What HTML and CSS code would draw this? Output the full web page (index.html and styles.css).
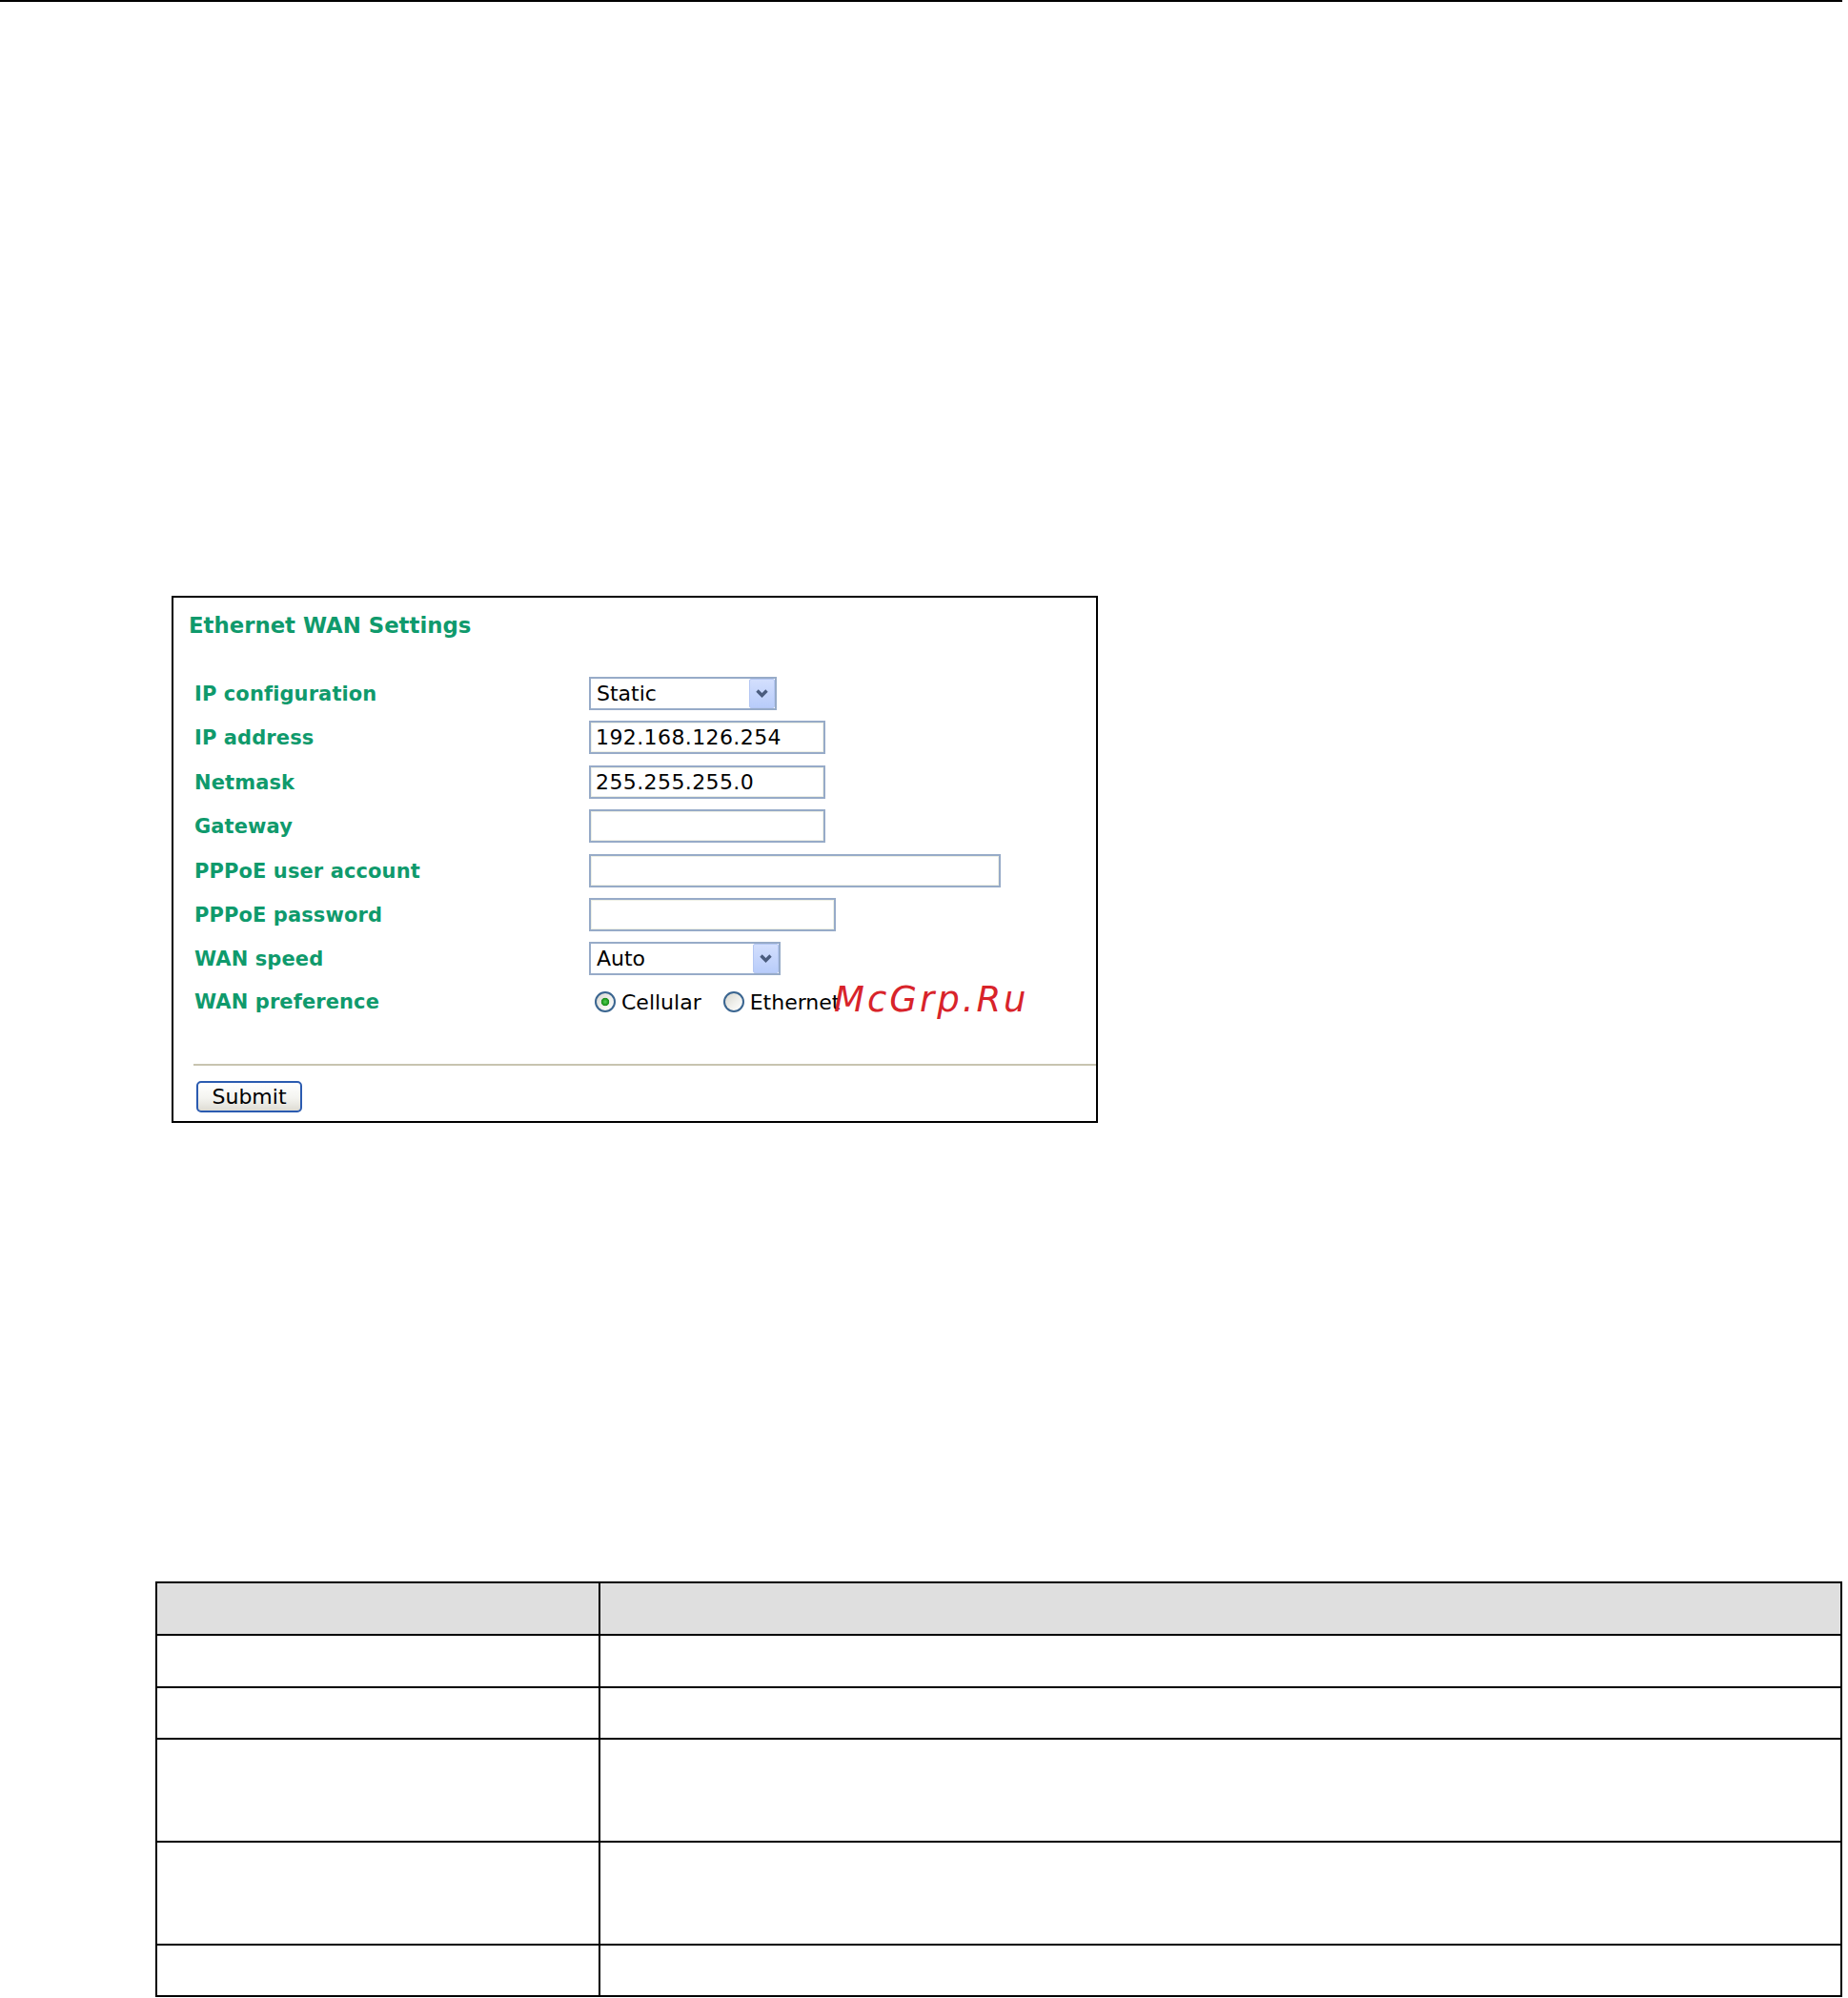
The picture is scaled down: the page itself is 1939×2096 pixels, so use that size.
FILE: index.html
```html
<!DOCTYPE html>
<html lang="en">
<head>
<meta charset="utf-8">
<title>Ethernet WAN Settings</title>
<link rel="stylesheet" href="styles.css">
</head>
<body>
<div class="top-rule"></div>

<section class="panel">
  <h2 class="panel-title">Ethernet WAN Settings</h2>
  <div class="form">
    <div class="row">
      <span class="label">IP configuration</span>
      <span class="select-wrap select-ipconf">
        <select class="select"><option>Static</option></select>
        <span class="select-btn"><svg width="25" height="29" viewBox="0 0 25 29"><path d="M7.5 11.5 L12.5 16.5 L17.5 11.5" fill="none" stroke="#4a5c7e" stroke-width="3.4"/></svg></span>
      </span>
    </div>
    <div class="row">
      <span class="label">IP address</span>
      <input class="text w-ip" type="text" value="192.168.126.254">
    </div>
    <div class="row">
      <span class="label">Netmask</span>
      <input class="text w-ip" type="text" value="255.255.255.0">
    </div>
    <div class="row">
      <span class="label">Gateway</span>
      <input class="text w-ip" type="text" value="">
    </div>
    <div class="row">
      <span class="label">PPPoE user account</span>
      <input class="text w-account" type="text" value="">
    </div>
    <div class="row">
      <span class="label">PPPoE password</span>
      <input class="text w-pass" type="password" value="">
    </div>
    <div class="row">
      <span class="label">WAN speed</span>
      <span class="select-wrap select-speed">
        <select class="select"><option>Auto</option></select>
        <span class="select-btn"><svg width="25" height="29" viewBox="0 0 25 29"><path d="M7.5 11.5 L12.5 16.5 L17.5 11.5" fill="none" stroke="#4a5c7e" stroke-width="3.4"/></svg></span>
      </span>
    </div>
    <div class="row radio-row">
      <span class="label">WAN preference</span>
      <span class="radios">
        <label class="radio-opt"><input class="radio" type="radio" name="pref" checked><span>Cellular</span></label>
        <label class="radio-opt radio-opt-2"><input class="radio" type="radio" name="pref"><span>Ethernet</span></label>
      </span>
    </div>
  </div>
  <hr class="sep">
  <div class="actions"><button class="btn" type="button">Submit</button></div>
  <span class="watermark">McGrp.Ru</span>
</section>

<table class="grid">
  <tr class="head"><td class="c1"></td><td class="c2"></td></tr>
  <tr class="r55"><td class="c1"></td><td class="c2"></td></tr>
  <tr class="r54"><td class="c1"></td><td class="c2"></td></tr>
  <tr class="r108"><td class="c1"></td><td class="c2"></td></tr>
  <tr class="r108"><td class="c1"></td><td class="c2"></td></tr>
  <tr class="r54"><td class="c1"></td><td class="c2"></td></tr>
</table>
</body>
</html>
```

FILE: styles.css
```css
html, body {
  margin: 0;
  padding: 0;
  background: #fff;
  overflow: hidden;
}

body {
  font-family: "DejaVu Sans", Verdana, sans-serif;
  color: #000;
}

.top-rule {
  width: 1933px;
  height: 2px;
  background: #000;
}

.panel {
  position: relative;
  box-sizing: border-box;
  width: 972px;
  margin: 623px 0 0 180px;
  border: 2px solid #000;
  padding: 16px 0 9px 16px;
}

.panel-title {
  margin: 0 0 41px 0;
  font-size: 22.8px;
  line-height: 26px;
  font-weight: bold;
  color: #0f9a6c;
}

.form {
  margin-left: 6px;
  display: flex;
  flex-direction: column;
  gap: 11.4px;
}

.row {
  display: flex;
  align-items: baseline;
}

.label {
  flex: none;
  width: 414px;
  font-size: 21px;
  letter-spacing: 0.1px;
  font-weight: bold;
  color: #0f9a6c;
}

.text {
  box-sizing: border-box;
  height: 35px;
  margin: 0;
  padding: 0 5px;
  border: 2px solid #97abc8;
  box-shadow: inset 0 0 0 1px #eef0e6;
  border-radius: 0;
  outline: none;
  font-family: "DejaVu Sans", Verdana, sans-serif;
  font-size: 22px;
  letter-spacing: 0.4px;
  color: #000;
  background: #fff;
}

.w-ip { width: 248px; }
.w-account { width: 432px; }
.w-pass { width: 259px; }

.select-wrap {
  position: relative;
  display: inline-block;
  height: 35px;
}

.select-ipconf { width: 197px; }
.select-speed { width: 201px; }

.select {
  -webkit-appearance: none;
  appearance: none;
  box-sizing: border-box;
  width: 100%;
  height: 35px;
  margin: 0;
  padding: 0 0 0 6px;
  border: 2px solid #97abc8;
  border-radius: 0;
  background: #fff;
  font-family: "DejaVu Sans", Verdana, sans-serif;
  font-size: 22px;
  color: #000;
  outline: none;
}

.select-btn {
  position: absolute;
  top: 2px;
  right: 2px;
  bottom: 2px;
  width: 27px;
  box-sizing: border-box;
  border: 1px solid #b4c7f3;
  border-radius: 2px;
  background: linear-gradient(#d3dffd, #b8ccfa);
  pointer-events: none;
}

.select-btn svg {
  display: block;
}

.radio-row {
  align-items: center;
  margin-top: 4.2px;
}

.radios {
  display: flex;
  align-items: center;
  font-size: 22px;
}

.radio-opt {
  display: inline-flex;
  align-items: center;
  margin-left: 6px;
}

.radio-opt-2 {
  margin-left: 23px;
}

.radio {
  -webkit-appearance: none;
  appearance: none;
  flex: none;
  box-sizing: border-box;
  width: 22px;
  height: 22px;
  margin: 0 6px 0 0;
  border: 2px solid #3a6590;
  border-radius: 50%;
  background: linear-gradient(135deg, #d6d6cf 0%, #f0f0ec 55%, #ffffff 100%);
}

.radio:checked {
  background:
    radial-gradient(circle at 50% 50%, #55cf55 0, #27a527 2.6px, #1c8c1c 3.8px, rgba(255,255,255,0) 4.6px),
    linear-gradient(135deg, #d6d6cf 0%, #f0f0ec 55%, #ffffff 100%);
}

.sep {
  height: 2px;
  margin: 52.4px 0 0 5px;
  border: 0;
  background: #c8c4b0;
}

.actions {
  margin: 16px 0 0 8px;
}

.btn {
  display: block;
  box-sizing: border-box;
  width: 111px;
  height: 33px;
  padding: 0;
  border: 2px solid #2b5bb0;
  border-radius: 5px;
  background: linear-gradient(#ffffff 0%, #f4f4f0 55%, #dedcd4 100%);
  font-family: "DejaVu Sans", Verdana, sans-serif;
  font-size: 22px;
  color: #000;
}

.watermark {
  position: absolute;
  left: 693px;
  top: 403px;
  font-family: "DejaVu Sans", sans-serif;
  font-style: italic;
  font-size: 37px;
  line-height: 37px;
  letter-spacing: 3px;
  color: #d8232a;
  white-space: nowrap;
}

.grid {
  margin: 481px 0 0 163px;
  border-spacing: 0;
  border-top: 2px solid #000;
  border-left: 2px solid #000;
  table-layout: fixed;
  width: 1770px;
}

.grid td {
  box-sizing: border-box;
  padding: 0;
  border-right: 2px solid #000;
  border-bottom: 2px solid #000;
}

.grid .c1 { width: 465px; }
.grid .c2 { width: 1303px; }

.grid .head td { height: 55px; background: #dfdfdf; }
.grid .r55 td { height: 55px; }
.grid .r54 td { height: 54px; }
.grid .r108 td { height: 108px; }
```
